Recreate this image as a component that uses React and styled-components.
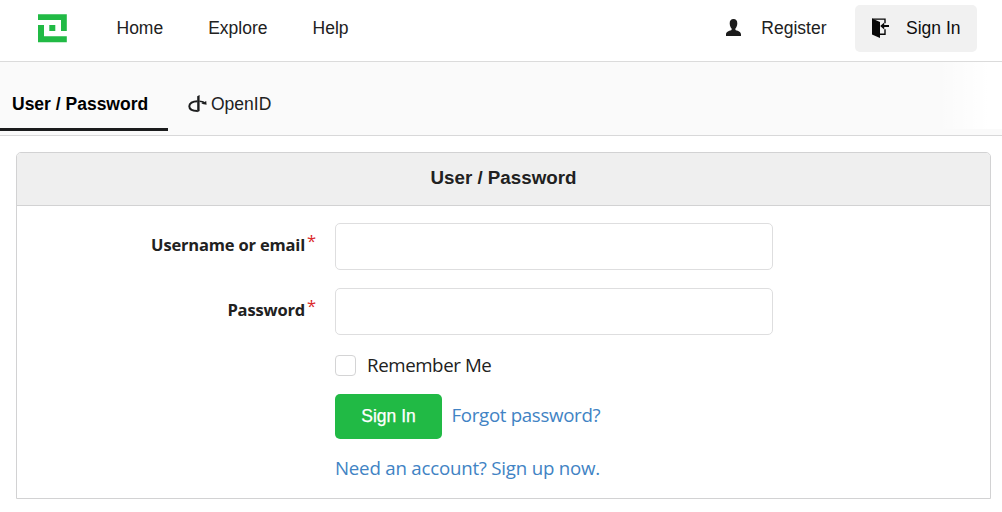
import React from 'react';
import styled, { createGlobalStyle } from 'styled-components';

const Global = createGlobalStyle`
  *, *::before, *::after { box-sizing: border-box; }
  body {
    margin: 0;
    background: #fff;
    color: #212121;
    font-family: "Liberation Sans", Arial, sans-serif;
    font-size: 17.5px;
    line-height: 20px;
  }
  a { text-decoration: none; }
  svg { flex: none; }
`;

const NavBar = styled.nav`
  display: flex;
  align-items: center;
  height: 62px;
  padding: 0 25px 5px 37px;
  border-bottom: 1px solid #dbdbdb;
`;
const NavLinks = styled.div`
  display: flex;
  gap: 45px;
  margin-left: 48.5px;
`;
const NavLink = styled.a`
  color: #212121;
`;
const NavActions = styled.div`
  display: flex;
  align-items: center;
  margin-left: auto;
`;
const NavAction = styled.a`
  display: flex;
  align-items: center;
  gap: ${p => (p.$active ? '17px' : '19px')};
  height: 47px;
  width: ${p => (p.$active ? '122px' : 'auto')};
  padding: 0 16px;
  border-radius: 5px;
  color: ${p => (p.$active ? '#0d0d0d' : '#212121')};
  background: ${p => (p.$active ? '#f1f1f1' : 'transparent')};
  margin-left: ${p => (p.$active ? '12.5px' : '0')};
`;

const TabBar = styled.div`
  display: flex;
  height: 74px;
  padding-bottom: 4px;
  background: linear-gradient(to right, transparent calc(100% - 64px), #fff calc(100% - 14px)) 0 0 / 100% 67px no-repeat, #fafafa;
  border-bottom: 1px solid #d8d8d9;
`;
const Tab = styled.a`
  display: flex;
  align-items: center;
  gap: 4px;
  height: 69px;
  padding: ${p => (p.$active ? '17px 0 0 12px' : '14px 20px 0')};
  width: ${p => (p.$active ? '168px' : 'auto')};
  border-bottom: ${p => (p.$active ? '3px solid #1b1c1d' : '0')};
  font-weight: ${p => (p.$active ? 700 : 400)};
  color: ${p => (p.$active ? '#000' : '#212121')};
  white-space: nowrap;
`;

const Panel = styled.section`
  margin: 16px 11px 0 16px;
  height: 347px;
  border: 1px solid #d2d2d3;
  border-radius: 5px 5px 0 0;
`;
const PanelTitle = styled.h4`
  margin: 0;
  height: 53px;
  padding-bottom: 2px;
  display: flex;
  align-items: center;
  justify-content: center;
  font-size: 18.75px;
  background: #efefef;
  border-bottom: 1px solid #d2d2d3;
  border-radius: 4px 4px 0 0;
`;
const Form = styled.form`
  display: flex;
  flex-direction: column;
  padding-top: 17px;
  font-family: "Open Sans", "Noto Sans", sans-serif;
`;
const Field = styled.div`
  display: grid;
  grid-template-columns: 299px 438px;
  column-gap: 19px;
  margin-bottom: 18px;
`;
const Label = styled.label`
  display: flex;
  justify-content: flex-end;
  gap: 3px;
  padding-top: 12px;
  font-size: 16.5px;
  font-weight: 700;
  white-space: nowrap;
  letter-spacing: -0.18px;
`;
const Star = styled.span`
  width: 8px;
  margin: -4px 1px 0 -1px;
  color: #db2828;
  font-weight: 400;
  letter-spacing: 0;
`;
const Input = styled.input`
  height: 47px;
  padding: 0 16px;
  border: 1px solid #dededf;
  border-radius: 5px;
  background: #fff;
  font: inherit;
  outline: none;
`;
const Row = styled.div`
  display: flex;
  align-items: center;
  margin-left: 318px;
  height: ${p => p.$height};
  margin-top: ${p => p.$top};
`;
const Checkbox = styled.input`
  appearance: none;
  width: 21px;
  height: 21px;
  margin: 0 11px 0 0;
  border: 1px solid #d4d4d5;
  border-radius: 4px;
  background: #fff;
`;
const Caption = styled.label`
  padding-bottom: 2px;
  font-size: 18.7px;
  letter-spacing: -0.4px;
`;
const TextLink = styled.a`
  padding-bottom: ${p => p.$lift || '0'};
  color: #4183c4;
  font-size: 18.7px;
  letter-spacing: ${p => p.$spacing || '0'};
`;
const Submit = styled.button`
  width: 107px;
  height: 45px;
  margin-right: 9.5px;
  padding: 0 0 1px;
  border: 0;
  border-radius: 5px;
  background: #21ba45;
  color: #fff;
  font: 17.5px "Liberation Sans", Arial, sans-serif;
  -webkit-text-stroke: 0.25px #fff;
`;

const Logo = () => (
  <svg width="31" height="31" viewBox="0 0 31 31" fill="#21ba45">
    <path d="M1 1.2H29.8V18H24V7H1ZM1 12H7V23.2H29.8V29.2H1ZM12.3 12H18.3V18H12.3Z" />
  </svg>
);
const UserIcon = () => (
  <svg width="17" height="20" viewBox="0 0 17 20" fill="#1c1c1c">
    <path d="M8.5 1C11 1 12.4 2.8 12.3 5.4C12.2 7.8 11.3 9.6 10.4 10.5V12C13.7 13.2 16 14 16 16.5V18H1V16.5C1 14 3.3 13.2 6.6 12V10.5C5.7 9.6 4.8 7.8 4.7 5.4C4.6 2.8 6 1 8.5 1Z" />
  </svg>
);
const SignInIcon = () => (
  <svg width="18" height="20" viewBox="0 0 18 20">
    <path d="M1 .5L9 4V20L1 16.6Z" fill="#080808" />
    <path d="M1 1.1H14V5.2M14 11.2V16.2H9" fill="none" stroke="#080808" strokeWidth="1.4" />
    <path d="M9.2 8L13.2 4.6V7.1H18V9H13.2V11.4Z" fill="#080808" />
  </svg>
);
const OpenIdIcon = () => (
  <svg width="19" height="18" viewBox="0 0 19 18" fill="none">
    <path d="M9.2 1.2L11.6 0V16L9.2 17.2Z" fill="#1b1c1d" />
    <path d="M9.4 6.3C4.5 6.3 1.3 8.4 1.3 11.2C1.3 13.9 4.6 15.8 9.4 16.1" stroke="#1b1c1d" strokeWidth="2" />
    <path d="M11.5 5.6C13.6 5.7 15.2 6.2 16.5 7L18.2 6.1L18.6 9.8L13.2 8.8L14.8 7.9C13.8 7.4 12.8 7.2 11.5 7.1Z" fill="#1b1c1d" />
  </svg>
);

export default function App() {
  return (
    <>
      <Global />
      <NavBar>
        <Logo />
        <NavLinks>
          <NavLink>Home</NavLink>
          <NavLink>Explore</NavLink>
          <NavLink>Help</NavLink>
        </NavLinks>
        <NavActions>
          <NavAction><UserIcon />Register</NavAction>
          <NavAction $active><SignInIcon />Sign In</NavAction>
        </NavActions>
      </NavBar>
      <TabBar>
        <Tab $active>User / Password</Tab>
        <Tab><OpenIdIcon />OpenID</Tab>
      </TabBar>
      <Panel>
        <PanelTitle>User / Password</PanelTitle>
        <Form>
          <Field>
            <Label htmlFor="user">Username or email<Star>*</Star></Label>
            <Input id="user" />
          </Field>
          <Field>
            <Label htmlFor="pass">Password<Star>*</Star></Label>
            <Input id="pass" type="password" />
          </Field>
          <Row $height="25px" $top="0">
            <Checkbox id="remember" type="checkbox" />
            <Caption htmlFor="remember">Remember Me</Caption>
          </Row>
          <Row $height="45px" $top="16px">
            <Submit type="button">Sign In</Submit>
            <TextLink $lift="3px" $spacing="-0.32px">Forgot password?</TextLink>
          </Row>
          <Row $height="26px" $top="16px">
            <TextLink $spacing="-0.22px">Need an account? Sign up now.</TextLink>
          </Row>
        </Form>
      </Panel>
    </>
  );
}
